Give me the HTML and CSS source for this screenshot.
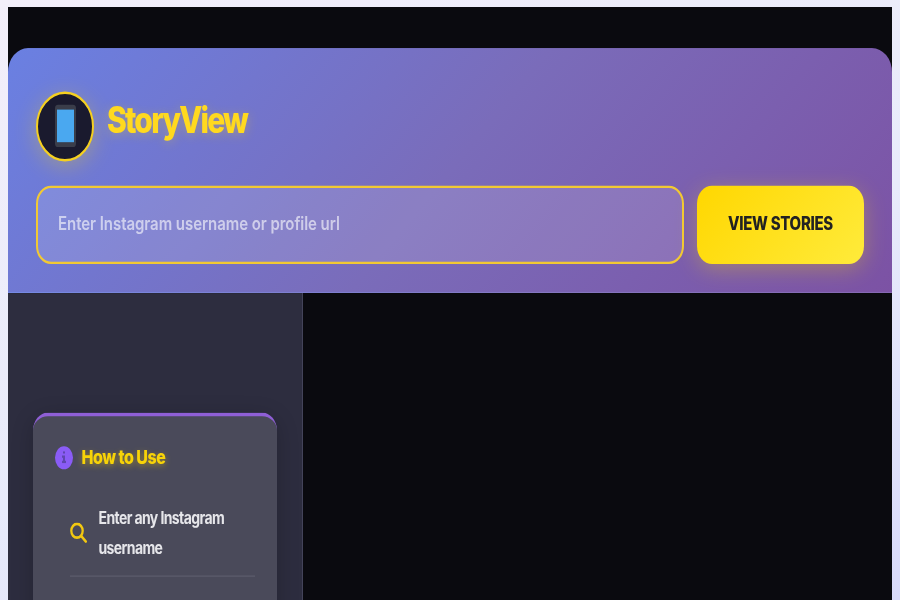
FILE: index.html
```html
<!DOCTYPE html>
<html lang="en">
  <head>
    <meta name="viewport" content="width=device-width, initial-scale=1.0" />
    <title>StoryView</title>
    <link rel="stylesheet" href="styles.css">
  </head>
  <body>
    <div class="app">
      <header class="header">
        <div class="brand">
          <div class="logo">
            <div class="phone"><div class="phone-screen"></div></div>
          </div>
          <h1>StoryView</h1>
        </div>
        <form class="search">
          <input type="text" class="search-input" placeholder="Enter Instagram username or profile url" />
          <button type="button" class="search-btn">VIEW STORIES</button>
        </form>
      </header>
      <div class="main">
        <aside class="sidebar">
          <section class="how-card">
            <h2>
              <span class="info-icon">
                <svg width="6" height="10" viewBox="0 0 6 10"><path d="M2 0h2v2H2zM1 3.500h3V8h1v2H1V8h1V5.500H1z" fill="#5f45b0"/></svg>
              </span>
              How to Use
            </h2>
            <ul class="steps">
              <li>
                <svg class="step-icon" width="17" height="17" viewBox="0 0 17 17" fill="none" stroke="#f2c811" stroke-width="2.300" stroke-linecap="round"><circle cx="7" cy="7" r="5.700"/><path d="M11.200 11.200l4.600 4.600"/></svg>
                <span>Enter any Instagram username</span>
              </li>
            </ul>
          </section>
        </aside>
        <div class="content"></div>
      </div>
    </div>
  </body>
</html>
```

FILE: styles.css
```css
* {
  padding: 0;
  margin: 0;
  box-sizing: border-box;
}
html,
body {
  height: 100%;
  overflow: hidden;
}
body {
  font-family: Inter, "Liberation Sans", sans-serif;
  background:
    radial-gradient(circle, rgba(120, 120, 170, 0.1) 3px, transparent 4px) 0 10px / 900px 43px,
    linear-gradient(160deg, #f3effa 0%, #e8ebfb 55%, #d9dafa 100%);
  padding: 7px 8px 0 7.5px;
}
/* the whole page is stretched vertically in the shot */
.app {
  width: 884.5px;
  height: 492px;
  background: #0a0a0f;
  padding-top: 33.500px;
  display: flex;
  flex-direction: column;
  overflow: hidden;
  transform: scaleY(1.207);
  transform-origin: top left;
  filter: blur(0.4px);
}
.header {
  height: 203px;
  flex-shrink: 0;
  padding: 36px 28px 0 28.500px;
  border-radius: 20px 20px 0 0;
  background: linear-gradient(135deg, #6a80e2 0%, #7a6cba 50%, #7c52a4 100%);
  border-bottom: 1px solid rgba(255, 255, 255, 0.08);
}
.brand {
  display: flex;
  align-items: center;
  gap: 13px;
  margin-bottom: 20px;
}
.logo {
  width: 58px;
  height: 58px;
  border-radius: 50%;
  background: #1a1a2e;
  border: 2px solid #f5d020;
  box-shadow: 0 4px 20px rgba(255, 215, 0, 0.3);
  display: flex;
  align-items: center;
  justify-content: center;
}
.phone {
  width: 21px;
  height: 35px;
  padding: 4px 2px;
  border-radius: 3px;
  background: #3a3d4a;
}
.phone-screen {
  height: 100%;
  background: #4aa8f0;
}
.brand h1 {
  margin-bottom: 12px;
  font-size: 30px;
  line-height: 36px;
  font-weight: 800;
  letter-spacing: -1.800px;
  color: #ffd91f;
  text-shadow: 0 2px 10px rgba(255, 215, 0, 0.3);
}
.search {
  display: flex;
  gap: 13px;
  height: 65px;
}
.search-input {
  flex: 1;
  min-width: 0;
  border: 2px solid #f2c933;
  border-radius: 15px;
  padding: 0 20px 2px;
  font-family: inherit;
  font-size: 15px;
  font-weight: 600;
  letter-spacing: -0.050px;
  color: #fff;
  background: rgba(255, 255, 255, 0.13);
  outline: none;
}
.search-input::placeholder {
  color: rgba(255, 255, 255, 0.6);
}
.search-btn {
  width: 167px;
  border: none;
  border-radius: 15px;
  padding-bottom: 2px;
  font-family: inherit;
  font-size: 15px;
  font-weight: 800;
  letter-spacing: -0.300px;
  color: #222;
  background: linear-gradient(135deg, #ffd700, #ffeb3b);
  box-shadow: 0 4px 20px rgba(255, 215, 0, 0.3);
}
.main {
  flex: 1;
  display: flex;
  min-height: 0;
}
.sidebar {
  width: 295px;
  flex-shrink: 0;
  padding: 99.500px 25px 0;
  background: #2d2d3f;
  border-right: 1px solid #44445a;
}
.how-card {
  height: 300px;
  padding: 22px;
  border-top: 3px solid #8f5fd6;
  border-radius: 15px;
  background: #4a4a5a;
  box-shadow: 0 4px 20px rgba(0, 0, 0, 0.2);
}
.how-card h2 {
  display: flex;
  align-items: center;
  gap: 9px;
  height: 24px;
  font-size: 16px;
  font-weight: 800;
  letter-spacing: -0.500px;
  color: #f7d308;
  text-shadow: 0 1px 6px rgba(255, 215, 0, 0.4);
  margin-bottom: 24.500px;
}
.info-icon {
  width: 18px;
  height: 19px;
  border-radius: 50%;
  background: #8a5cf6;
  display: flex;
  align-items: center;
  justify-content: center;
}
.steps {
  list-style: none;
  padding-left: 15px;
}
.steps li {
  display: flex;
  align-items: center;
  gap: 12px;
  padding-bottom: 10.500px;
  border-bottom: 1px solid #5e5e6d;
  font-size: 14px;
  line-height: 25.700px;
  font-weight: 700;
  letter-spacing: -0.600px;
  color: #e6e6ea;
}
.step-icon {
  flex-shrink: 0;
}
.content {
  flex: 1;
  background: #0a0a0f;
}
```
